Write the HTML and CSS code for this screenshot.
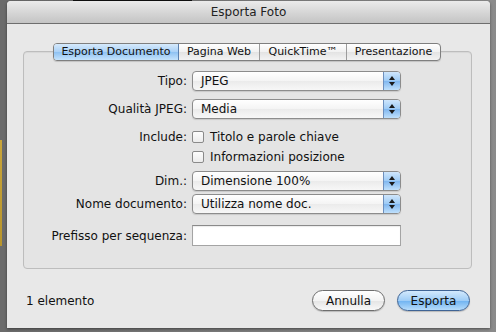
FILE: index.html
```html
<!DOCTYPE html>
<html lang="it">
<head>
<meta charset="UTF-8">
<title>Esporta Foto</title>
<link rel="stylesheet" href="styles.css">
</head>
<body>

<div class="window">
<div class="titlebar">Esporta Foto</div>

<div class="tabbox">
<div class="tabs">
<div class="tab active">Esporta Documento</div>
<div class="tab">Pagina Web</div>
<div class="tab">QuickTime™</div>
<div class="tab">Presentazione</div>
</div>

<div class="form">
<div class="row r-tipo">
<label>Tipo:</label>
<div class="popup"><span>JPEG</span><i class="arrows"></i></div>
</div>
<div class="row r-qual">
<label>Qualità JPEG:</label>
<div class="popup"><span>Media</span><i class="arrows"></i></div>
</div>
<div class="row r-inc">
<label>Include:</label>
<div class="check"><b></b>Titolo e parole chiave</div>
</div>
<div class="row r-pos">
<label></label>
<div class="check"><b></b>Informazioni posizione</div>
</div>
<div class="row r-dim">
<label>Dim.:</label>
<div class="popup"><span>Dimensione 100%</span><i class="arrows"></i></div>
</div>
<div class="row r-nome">
<label>Nome documento:</label>
<div class="popup"><span>Utilizza nome doc.</span><i class="arrows"></i></div>
</div>
<div class="row r-pref">
<label>Prefisso per sequenza:</label>
<div class="field"></div>
</div>
</div>
</div>

<div class="footer">
<span class="count">1 elemento</span>
<div class="buttons">
<button class="btn">Annulla</button>
<button class="btn default">Esporta</button>
</div>
</div>
</div>

</body>
</html>
```

FILE: styles.css
```css
/* ---------- GLOBAL ---------- */
*{margin:0;padding:0;box-sizing:border-box;}
html,body{width:496px;height:332px;overflow:hidden;}
body{
font-family:'DejaVu Sans',sans-serif;
font-size:12px;
color:#111;
background:
linear-gradient(#111,#111) 73px 0/119px 1px no-repeat,
linear-gradient(#c9a53a,#b8952c) 0 140px/2px 106px no-repeat,
linear-gradient(90deg,#6b6b6b 0,#6b6b6b 7px,#8c8c8c 490px,#8a8a8a 100%);
padding:1px 6px 0 7px;
}

/* ---------- WINDOW ---------- */
.window{
height:327px;
background:#e8e8e8;
border-radius:4px 4px 0 0;
box-shadow:0 1px 3px rgba(0,0,0,0.45);
}
.titlebar{
height:23px;
line-height:22px;
text-align:center;
font-size:12px;
color:#222;
background:linear-gradient(#ebebeb,#d3d3d3 60%,#c4c4c4);
border-bottom:1px solid #6e6e6e;
border-radius:4px 4px 0 0;
}

/* ---------- TAB BOX ---------- */
.tabbox{
margin:27px 18px 0 16px;
height:218px;
border:1px solid #bdbdbd;
border-radius:4px;
background:#e4e4e4;
box-shadow:inset 0 1px 1px rgba(0,0,0,0.06);
}
.tabs{
display:flex;
width:388px;
height:18px;
margin:-9px auto 0 29px;
border:1px solid #7f7f7f;
border-radius:4px;
background:linear-gradient(#ffffff,#f1f1f1 50%,#e3e3e3 51%,#f3f3f3);
box-shadow:0 1px 1px rgba(0,0,0,0.15);
overflow:hidden;
}
.tab{
height:16px;
line-height:16px;
font-size:11px;
text-align:center;
border-left:1px solid #9c9c9c;
}
.tab:nth-child(1){width:125px;border-left:none;}
.tab:nth-child(2){width:80px;}
.tab:nth-child(3){width:87px;}
.tab:nth-child(4){flex:1;}
.tab.active{
background:linear-gradient(#d6eafc,#a9d0f6 50%,#8ec1f2 51%,#c5e3fc);
border-right:1px solid #5a7fae;
}
.tab.active + .tab{border-left:none;}

/* ---------- FORM ---------- */
.form{display:flex;flex-direction:column;}
.row{
display:grid;
grid-template-columns:163px 209px;
column-gap:5px;
align-items:center;
height:20px;
}
.row label{text-align:right;}
.r-tipo{margin-top:10px;}
.r-qual{margin-top:8px;}
.r-inc{margin-top:8px;}
.r-pos{margin-top:0;}
.r-dim{margin-top:4px;}
.r-nome{margin-top:3px;}
.r-pref{margin-top:11px;height:21px;}

.popup{
display:flex;
height:20px;
border:1px solid #8c8c8c;
border-radius:4px;
background:linear-gradient(#ffffff,#f4f4f4 50%,#ebebeb 51%,#f7f7f7);
box-shadow:0 1px 1px rgba(0,0,0,0.12);
overflow:hidden;
}
.popup span{flex:1;line-height:18px;padding-left:8px;}
.arrows{
width:17px;
position:relative;
border-left:1px solid #6d8fbd;
background:linear-gradient(#cfe6fc,#9ccaf5 50%,#7fb6ef 51%,#bfe0fc);
}
.arrows::before,.arrows::after{
content:"";
position:absolute;
left:5px;
border-left:3px solid transparent;
border-right:3px solid transparent;
}
.arrows::before{top:4px;border-bottom:4px solid #1a1a1a;}
.arrows::after{top:10px;border-top:4px solid #1a1a1a;}

.check{display:flex;align-items:center;gap:6px;}
.check b{
width:12px;height:12px;
border:1px solid #8a8a8a;
border-radius:2px;
background:linear-gradient(#fdfdfd,#ececec);
}

.field{
height:21px;
background:#fff;
border:1px solid #a4a4a4;
border-top-color:#8a8a8a;
box-shadow:inset 0 1px 1px rgba(0,0,0,0.08);
}

/* ---------- FOOTER ---------- */
.footer{
display:flex;
justify-content:space-between;
align-items:center;
margin:21px 20px 0 19px;
}
.count{font-size:12px;}
.buttons{display:flex;gap:12px;}
.btn{
font-family:'DejaVu Sans',sans-serif;
font-size:12px;
color:#111;
width:73px;
height:21px;
border:1px solid #6e6e6e;
border-radius:11px;
background:linear-gradient(#ffffff,#f3f3f3 50%,#e4e4e4 51%,#f8f8f8);
box-shadow:0 1px 1px rgba(0,0,0,0.2);
}
.btn.default{
border-color:#3f6495;
background:linear-gradient(#d3e9fd,#9fcdf7 50%,#6eb2f1 51%,#b7dcfb);
}
```
